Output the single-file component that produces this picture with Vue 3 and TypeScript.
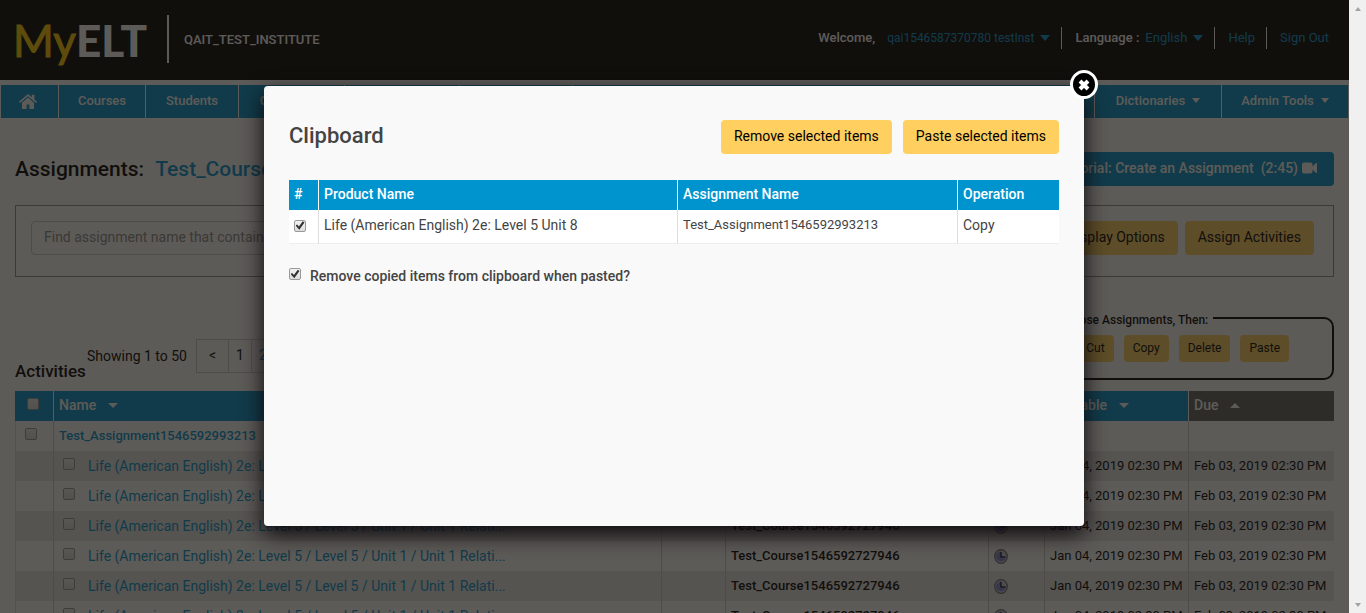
<script setup lang="ts">
import { ref } from 'vue'

interface NavItem {
  label: string
  width: number
}

const leftNav: NavItem[] = [
  { label: 'Courses', width: 87 },
  { label: 'Students', width: 93 },
  { label: 'Gradebook', width: 106 },
  { label: '', width: 115 },
  { label: '', width: 113 },
]
const rightNav: NavItem[] = [
  { label: 'Dictionaries', width: 127 },
  { label: 'Admin Tools', width: 127 },
]

const course = 'Test_Course1546592727946'
const activity = 'Life (American English) 2e: Level 5 / Level 5 / Unit 1 / Unit 1 Relati...'
const rows = [1, 2, 3, 4, 5, 6]
const tools = ['Cut', 'Copy', 'Delete', 'Paste']

const itemSelected = ref(true)
const removeCopied = ref(true)
const open = ref(true)
</script>

<template>
  <div class="app">
    <div class="page">
      <header class="top">
        <div class="logo"><span class="my">My</span><span class="elt">ELT</span></div>
        <div class="institute">QAIT_TEST_INSTITUTE</div>
        <div class="account">
          <div class="group user">
            <span>Welcome,</span>
            <a href="#">qai1546587370780 testInst</a><i class="caret"></i>
          </div>
          <div class="group lang">
            <span>Language :</span>
            <a href="#">English</a><i class="caret"></i>
          </div>
          <div class="group help"><a href="#">Help</a></div>
          <div class="group out"><a href="#">Sign Out</a></div>
        </div>
      </header>

      <nav class="nav">
        <a href="#" class="home" aria-label="Home">
          <svg width="18" height="16" viewBox="0 0 18 16" fill="#fff">
            <path d="M9 0 0 7.800l1 1.300L9 2.300l8 6.800 1-1.300-2.600-2.300V.8h-2.600v2.500z" />
            <path d="M9 3.600 3 8.800V15h4.600v-4.500h2.800V15H15V8.800z" />
          </svg>
        </a>
        <a v-for="(item, i) in leftNav" :key="i" href="#" :style="{ width: item.width + 'px' }">{{ item.label }}</a>
        <span class="fill"></span>
        <a v-for="item in rightNav" :key="item.label" href="#" :style="{ width: item.width + 'px' }">
          {{ item.label }}<i class="caret small"></i>
        </a>
      </nav>

      <main class="content">
        <div class="titlebar">
          <h1>Assignments: <a href="#">{{ course }}</a></h1>
          <button type="button" class="tutorial">
            Tutorial: Create an Assignment&nbsp; (2:45)
            <svg width="15" height="12" viewBox="0 0 15 12" fill="#fff">
              <rect x="0" y="0.500" width="10.500" height="11" rx="2" />
              <path d="M9.500 5.500 14 1h1v10h-1L9.500 6.500z" />
            </svg>
          </button>
        </div>

        <div class="filter">
          <input type="text" class="search" aria-label="Find assignment" placeholder="Find assignment name that contains" />
          <span class="fill"></span>
          <button type="button" class="gold">Display Options</button>
          <button type="button" class="gold">Assign Activities</button>
        </div>

        <div class="listbar">
          <h2>Activities</h2>
          <div class="pager">
            <span class="showing">Showing 1 to 50</span>
            <button type="button" class="prev">&lt;</button>
            <button type="button">1</button>
            <button type="button" class="other">2</button>
          </div>
          <span class="fill"></span>
          <fieldset class="tools">
            <legend>Choose Assignments, Then:</legend>
            <button v-for="t in tools" :key="t" type="button" class="gold mini">{{ t }}</button>
          </fieldset>
        </div>

        <table class="list">
          <colgroup>
            <col class="c-check" /><col /><col class="c-gap" /><col class="c-course" />
            <col class="c-clock" /><col class="c-avail" /><col class="c-due" />
          </colgroup>
          <thead>
            <tr>
              <th class="pick"><input type="checkbox" aria-label="Select all" /></th>
              <th>Name<i class="caret sort"></i></th>
              <th></th>
              <th></th>
              <th></th>
              <th>Available<i class="caret sort"></i></th>
              <th class="sorted">Due<i class="caret sort up"></i></th>
            </tr>
          </thead>
          <tbody>
            <tr>
              <td class="pick"><input type="checkbox" aria-label="Select assignment" /></td>
              <td><a href="#" class="strong">Test_Assignment1546592993213</a></td>
              <td></td><td></td><td></td><td></td><td></td>
            </tr>
            <tr v-for="r in rows" :key="r">
              <td></td>
              <td class="activity">
                <label><input type="checkbox" /><a href="#">{{ activity }}</a></label>
              </td>
              <td></td>
              <td class="course">{{ course }}</td>
              <td>
                <svg class="clock" width="14" height="15" viewBox="0 0 14 15">
                  <ellipse cx="7" cy="7.500" rx="6.300" ry="6.800" fill="#c9cde8" stroke="#6f6f6f" stroke-width="1.200" />
                  <path d="M7 7.500V2.500A5 5 0 1 0 12 7.500z" fill="#8088d0" />
                  <path d="M7 3v5h4.500" fill="none" stroke="#000" stroke-width="1.200" />
                </svg>
              </td>
              <td class="date">Jan 04, 2019 02:30 PM</td>
              <td class="date">Feb 03, 2019 02:30 PM</td>
            </tr>
          </tbody>
        </table>
      </main>

      <div v-if="open" class="backdrop">
        <section class="dialog" role="dialog" aria-labelledby="clip-title">
          <button type="button" class="close" aria-label="Close" @click="open = false">
            <svg width="12" height="12" viewBox="0 0 12 12">
              <path d="M2 2l8 8M10 2l-8 8" stroke="#fff" stroke-width="4" />
            </svg>
          </button>
          <div class="dialog-head">
            <h2 id="clip-title">Clipboard</h2>
            <button type="button" class="gold">Remove selected items</button>
            <button type="button" class="gold">Paste selected items</button>
          </div>
          <table class="clip">
            <colgroup>
              <col class="k-num" /><col /><col class="k-name" /><col class="k-op" />
            </colgroup>
            <thead>
              <tr><th>#</th><th>Product Name</th><th>Assignment Name</th><th>Operation</th></tr>
            </thead>
            <tbody>
              <tr>
                <td><input v-model="itemSelected" type="checkbox" aria-label="Select item" /></td>
                <td>Life (American English) 2e: Level 5 Unit 8</td>
                <td class="code">Test_Assignment1546592993213</td>
                <td>Copy</td>
              </tr>
            </tbody>
          </table>
          <label class="remove">
            <input v-model="removeCopied" type="checkbox" />
            <span>Remove copied items from clipboard when pasted?</span>
          </label>
        </section>
      </div>
    </div>
    <div class="scrollbar" aria-hidden="true"><i class="up"></i><i class="down"></i></div>
  </div>
</template>

<style>
body {
  overflow: hidden;
}
</style>

<style scoped>
* {
  box-sizing: border-box;
}
.app {
  display: flex;
  height: 100vh;
  overflow: hidden;
  font: 14px/20px Roboto, "Noto Sans", sans-serif;
  color: #000;
}
.page {
  position: relative;
  flex: 1;
  min-width: 0;
  overflow: hidden;
  background: #fff;
}
a {
  color: #0094cf;
  text-decoration: none;
}
h1,
h2 {
  margin: 0;
}
button {
  font: inherit;
  color: inherit;
  border: 0;
  cursor: pointer;
}
.fill {
  flex: 1;
}
.caret {
  display: inline-block;
  border: 5px solid transparent;
  border-top: 6px solid currentColor;
  border-bottom: 0;
}
.caret.small {
  border-width: 5px 4px 0;
  margin-left: 7px;
}
.caret.sort {
  border-width: 5px 5px 0;
  margin-left: 12px;
  vertical-align: 2px;
}
.caret.up {
  border-top: 0;
  border-bottom: 5px solid currentColor;
}

.top {
  display: flex;
  height: 80px;
  background: #000;
  color: #fff;
}
.logo {
  display: flex;
  align-items: baseline;
  width: 169px;
  height: 48px;
  margin-top: 15px;
  padding-left: 13px;
  border-right: 2px solid #fff;
  line-height: 50px;
}
.my {
  font-family: Lato, sans-serif;
  font-size: 44px;
  color: #ffcb00;
  -webkit-text-stroke: 1px #ffcb00;
}
.elt {
  font-family: Lato, sans-serif;
  font-size: 44px;
  font-weight: 900;
}
.institute {
  padding: 30px 0 0 15px;
  font-size: 13px;
  font-weight: 500;
}
.account {
  display: flex;
  margin-left: auto;
  padding: 27px 20px 0 0;
  font-size: 13px;
}
.group {
  display: flex;
  align-items: center;
  gap: 6px;
  height: 22px;
  padding: 0 11px 0 13px;
  border-left: 1px solid #fff;
}
.group span {
  font-weight: 500;
}
.group .caret {
  color: #0094cf;
}
.user {
  border-left: 0;
}
.user a {
  font-size: 12px;
}
.user span {
  margin-right: 6px;
}
.group.out {
  padding-right: 0;
}

.nav {
  display: flex;
  height: 33px;
  margin: 5px 0 0 1px;
  background: #0094cf;
}
.nav a {
  display: flex;
  align-items: center;
  justify-content: center;
  padding-bottom: 2px;
  border-right: 1px solid #fff;
  color: #fff;
  font-size: 13px;
  font-weight: 500;
}
.nav .home {
  width: 58px;
  padding: 0 3px 0 0;
}
.nav .fill {
  border-right: 1px solid #fff;
}

.content {
  padding: 34px 15px 0;
}
.titlebar {
  display: flex;
  align-items: center;
  justify-content: space-between;
  height: 34px;
}
h1 {
  font-size: 21px;
  font-weight: 500;
}
h1 a {
  margin-left: 6px;
}
.tutorial {
  display: flex;
  align-items: center;
  gap: 4px;
  height: 34px;
  padding: 0 17px 2px;
  border-radius: 4px;
  background: #0094cf;
  color: #fff;
  font-weight: 500;
}
.filter {
  display: flex;
  gap: 7px;
  height: 72px;
  margin-top: 19px;
  padding: 15px 19px 0 15px;
  border: 1px solid #8f8f8f;
}
.search {
  width: 420px;
  height: 34px;
  padding: 0 12px 2px;
  border: 1px solid #ccc;
  border-radius: 4px;
  background: #fff;
  font: inherit;
}
.search::placeholder {
  color: #8c8c8c;
}
.gold {
  height: 34px;
  padding: 0 13px 2px;
  border-radius: 4px;
  background: #ffcf60;
  color: #000;
  white-space: nowrap;
}
.listbar {
  display: flex;
  align-items: flex-end;
  height: 65px;
  margin-top: 38px;
}
.listbar h2 {
  width: 72px;
  font-size: 17px;
  line-height: 18px;
  font-weight: 500;
}
.pager {
  display: flex;
  align-items: center;
  align-self: flex-start;
  height: 34px;
  margin-top: 24px;
}
.showing {
  width: 109px;
}
.pager button {
  width: 24px;
  height: 34px;
  margin-right: -1px;
  border: 1px solid #cfcfcf;
  padding: 0 0 2px;
  background: #fff;
}
.pager .prev {
  width: 33px;
}
.pager .other {
  color: #0094cf;
}
.tools {
  display: flex;
  gap: 10px;
  height: 72px;
  margin: 0;
  padding: 7px 43px 0 39px;
  border: 2px solid #000;
  border-radius: 10px;
}
.tools legend {
  margin-left: -24px;
  padding: 4px 5px 0;
  font-size: 12px;
  line-height: 16px;
  font-weight: 500;
}
.gold.mini {
  height: 27px;
  padding: 0 9px 2px;
  font-size: 12px;
}

table {
  width: 100%;
  border-spacing: 0;
  table-layout: fixed;
}
th,
td {
  padding: 0 5px 2px;
  text-align: left;
  white-space: nowrap;
}
.list {
  margin-top: 11px;
}
.c-check {
  width: 39px;
}
.c-gap {
  width: 64px;
}
.c-course {
  width: 263px;
}
.c-clock {
  width: 56px;
}
.c-avail {
  width: 144px;
}
.c-due {
  width: 145px;
}
.list th,
.list td {
  height: 30px;
}
.list th {
  background: #0094cf;
  color: #fff;
  font-weight: 500;
  border-right: 1px solid #fff;
}
.list th.sorted {
  background: #616161;
}
.list td {
  border-right: 1px solid #ccc;
}
.list th:last-child,
.list td:last-child {
  border-right: 0;
}
.list td:first-child {
  border-left: 1px solid #ddd;
}
.list tbody tr:nth-child(even) {
  background: #e6e6e6;
}
.list th.pick {
  padding-left: 12px;
}
.list td.pick {
  padding-left: 9px;
}
.strong,
.course {
  font-size: 13px;
  font-weight: 500;
}
.date,
.code {
  font-size: 13px;
}
.list td.activity,
.list td.course,
.list td.date {
  padding-bottom: 0;
}
.activity label {
  display: flex;
  align-items: center;
  gap: 13px;
  padding-left: 4px;
}
.clock {
  display: block;
  margin-top: 2px;
}
input[type="checkbox"] {
  appearance: none;
  display: inline-grid;
  place-items: center;
  width: 12px;
  height: 12px;
  margin: 0 4px 0 0;
  border: 1px solid #999;
  border-radius: 2px;
  background: linear-gradient(#f2f2f2, #dcdcdc);
}
input[type="checkbox"]:checked::after {
  content: "";
  width: 9px;
  height: 9px;
  background: #333;
  clip-path: polygon(0 50%, 18% 38%, 38% 60%, 80% 2%, 100% 16%, 42% 96%);
}
.activity input[type="checkbox"] {
  margin: 0 0 4px;
}

.backdrop {
  position: absolute;
  inset: 0;
  display: flex;
  align-items: center;
  justify-content: center;
  padding: 0 1px 1px 0;
  background: rgba(24, 21, 17, 0.7);
}
.dialog {
  position: relative;
  width: 820px;
  min-height: 440px;
  padding: 34px 25px;
  border-radius: 4px;
  background: #f9f9f9;
  box-shadow: 0 8px 22px #0b070b;
  color: #444;
}
.close {
  position: absolute;
  top: -16px;
  right: -14px;
  display: grid;
  place-items: center;
  width: 28px;
  height: 29px;
  padding: 0;
  border: 3px solid #fff;
  border-radius: 50%;
  background: #000;
}
.dialog-head {
  display: flex;
  gap: 11px;
}
.dialog-head h2 {
  flex: 1;
  font-size: 22px;
  line-height: 32px;
  font-weight: 500;
}
.clip {
  margin-top: 26px;
}
.k-num {
  width: 30px;
}
.k-name {
  width: 280px;
}
.k-op {
  width: 101px;
}
.clip th {
  height: 30px;
  background: #0094cf;
  color: #fff;
  font-weight: 500;
  border-right: 1px solid #fff;
}
.clip td {
  height: 34px;
  padding-bottom: 3px;
  background: #fff;
  border-right: 1px solid #ddd;
  border-bottom: 1px solid #eee;
}
.clip th:last-child,
.clip td:last-child {
  border-right: 0;
}
.remove {
  display: flex;
  align-items: center;
  gap: 5px;
  margin-top: 22px;
  font-weight: 500;
}
.remove input[type="checkbox"] {
  margin-bottom: 4px;
}

.scrollbar {
  display: flex;
  flex-direction: column;
  align-items: center;
  justify-content: space-between;
  width: 17px;
  padding: 7px 0 6px;
  background: #f0f0f0;
}
.scrollbar i {
  border: 3px solid transparent;
}
.scrollbar .up {
  border-top: 0;
  border-bottom: 4px solid #a3a3a3;
}
.scrollbar .down {
  border-bottom: 0;
  border-top: 4px solid #a3a3a3;
}
</style>
